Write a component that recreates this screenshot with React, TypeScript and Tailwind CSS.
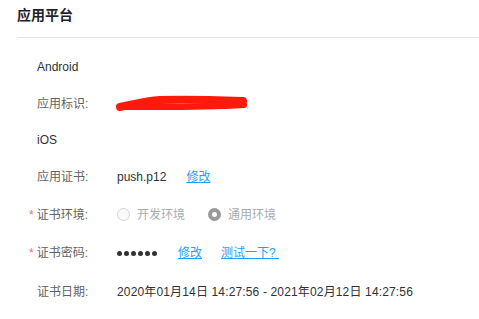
import React from "react";

function Radio({ checked, label }: { checked?: boolean; label: string }) {
  return (
    <label className="flex items-center gap-[7px] text-[#a8abb2]">
      {checked ? (
        <span className="flex h-[13px] w-[13px] items-center justify-center rounded-full bg-[#9a9a9a]">
          <span className="h-[5px] w-[5px] rounded-full bg-white" />
        </span>
      ) : (
        <span className="h-[13px] w-[13px] rounded-full border border-[#d4d4d4] bg-[#fafafa]" />
      )}
      <span>{label}</span>
    </label>
  );
}

function Row({
  label,
  required,
  h,
  children,
}: {
  label: string;
  required?: boolean;
  h: string;
  children?: React.ReactNode;
}) {
  return (
    <div className={`flex items-center ${h}`}>
      <div className="w-[80px] shrink-0 text-[#606266]">
        {required && <span className="-ml-[8px] mr-[3px] text-[#f56c6c]">*</span>}
        {label}
      </div>
      <div className="flex items-center text-[#303133]">{children}</div>
    </div>
  );
}

function Scribble() {
  return (
    <svg width="134" height="18" viewBox="0 0 134 18" className="-ml-[2px] mt-[1px]">
      <path
        d="M5 12 C 20 9, 30 6, 45 5 C 70 4, 100 5, 128 6"
        stroke="#ff1a0a"
        strokeWidth="8"
        strokeLinecap="round"
        fill="none"
      />
      <path
        d="M6 12 C 40 12, 80 13, 129 10"
        stroke="#ff1a0a"
        strokeWidth="6"
        strokeLinecap="round"
        fill="none"
      />
    </svg>
  );
}

export default function App() {
  return (
    <div
      className="min-h-screen bg-white pl-[17px] text-[12px]"
      style={{ fontFamily: '"Liberation Sans", "Noto Sans CJK SC", sans-serif' }}
    >
      <div className="flex h-[38px] items-center border-b border-[#e4e4e4] pb-[7px] text-[14px] font-bold text-[#1f2329]">
        应用平台
      </div>
      <div className="pl-[20px] pt-[11px]">
        <div className="flex h-[36px] items-center text-[#303133]">Android</div>
        <Row label="应用标识:" h="h-[37px]">
          <Scribble />
        </Row>
        <div className="flex h-[36px] items-center text-[#303133]">iOS</div>
        <Row label="应用证书:" h="h-[38px]">
          <span>push.p12</span>
          <a className="ml-[20px] cursor-pointer text-[#1e9fff] underline">修改</a>
        </Row>
        <Row label="证书环境:" required h="h-[37px]">
          <div className="flex items-center gap-[23px]">
            <Radio label="开发环境" />
            <Radio checked label="通用环境" />
          </div>
        </Row>
        <Row label="证书密码:" required h="h-[40px]">
          <span className="flex gap-[2px]">
            {[0, 1, 2, 3, 4, 5].map((i) => (
              <span key={i} className="h-[5px] w-[5px] rounded-full bg-[#333]" />
            ))}
          </span>
          <a className="ml-[21px] cursor-pointer text-[#1e9fff] underline">修改</a>
          <a className="ml-[19px] cursor-pointer text-[#1e9fff] underline">测试一下?&nbsp;</a>
        </Row>
        <Row label="证书日期:" h="h-[38px]">
          <span className="tracking-[0.15px]">2020年01月14日 14:27:56 - 2021年02月12日 14:27:56</span>
        </Row>
      </div>
    </div>
  );
}
